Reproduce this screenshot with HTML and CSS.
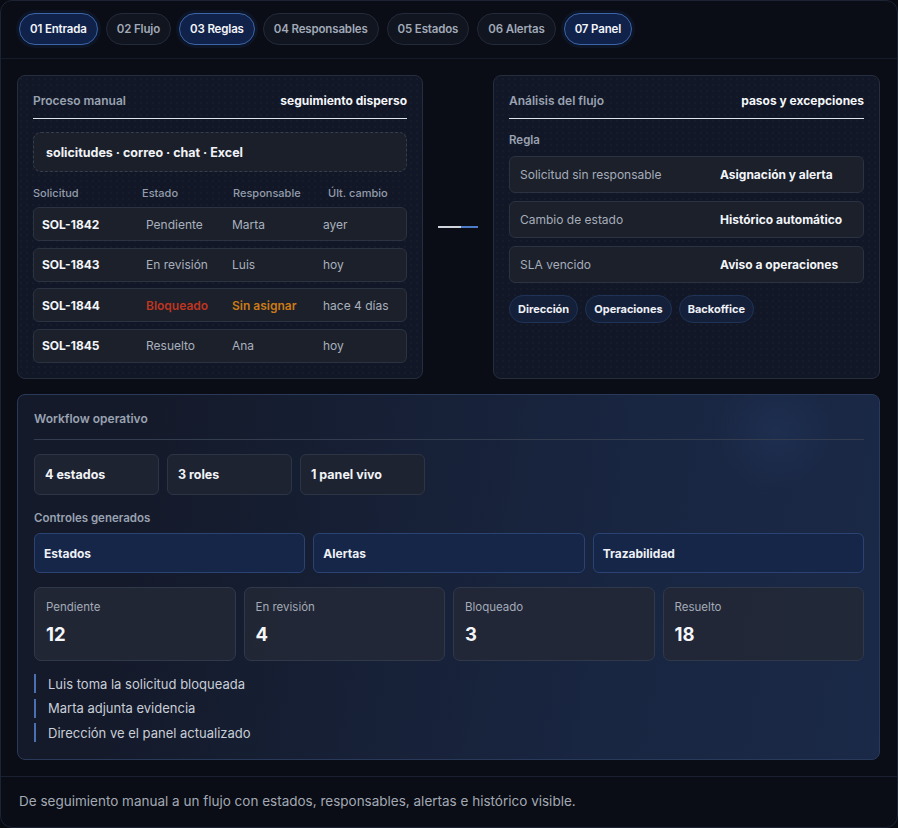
FILE: index.html
```html
<!DOCTYPE html>
<html lang="es">
<head>
<meta charset="utf-8">
<title>Workflow</title>
<link rel="stylesheet" href="styles.css">
</head>
<body>
<div class="frame">
  <nav class="tabs">
    <span class="tab active">01 Entrada</span>
    <span class="tab">02 Flujo</span>
    <span class="tab active">03 Reglas</span>
    <span class="tab">04 Responsables</span>
    <span class="tab">05 Estados</span>
    <span class="tab">06 Alertas</span>
    <span class="tab active">07 Panel</span>
  </nav>

  <main class="main">
    <div class="top">
      <section class="card">
        <div class="card-head">
          <span class="head-label">Proceso manual</span>
          <span class="head-value">seguimiento disperso</span>
        </div>
        <div class="sources">solicitudes · correo · chat · Excel</div>
        <div class="thead">
          <span>Solicitud</span><span>Estado</span><span>Responsable</span><span>Últ. cambio</span>
        </div>
        <div class="rows">
          <div class="row"><span class="id">SOL-1842</span><span>Pendiente</span><span>Marta</span><span>ayer</span></div>
          <div class="row"><span class="id">SOL-1843</span><span>En revisión</span><span>Luis</span><span>hoy</span></div>
          <div class="row"><span class="id">SOL-1844</span><span class="red">Bloqueado</span><span class="orange">Sin asignar</span><span>hace 4 días</span></div>
          <div class="row"><span class="id">SOL-1845</span><span>Resuelto</span><span>Ana</span><span>hoy</span></div>
        </div>
      </section>

      <div class="connector"><span class="c-left"></span><span class="c-right"></span></div>

      <section class="card">
        <div class="card-head">
          <span class="head-label">Análisis del flujo</span>
          <span class="head-value">pasos y excepciones</span>
        </div>
        <div class="sub-label rule-label">Regla</div>
        <div class="rules">
          <div class="rule"><span>Solicitud sin responsable</span><b>Asignación y alerta</b></div>
          <div class="rule"><span>Cambio de estado</span><b>Histórico automático</b></div>
          <div class="rule"><span>SLA vencido</span><b>Aviso a operaciones</b></div>
        </div>
        <div class="chips">
          <span class="chip">Dirección</span>
          <span class="chip">Operaciones</span>
          <span class="chip">Backoffice</span>
        </div>
      </section>
    </div>

    <section class="card workflow">
      <div class="wf-head">Workflow operativo</div>
      <div class="pills">
        <span class="pill">4 estados</span>
        <span class="pill">3 roles</span>
        <span class="pill">1 panel vivo</span>
      </div>
      <div class="sub-label ctrl-label">Controles generados</div>
      <div class="controls">
        <span class="control">Estados</span>
        <span class="control">Alertas</span>
        <span class="control">Trazabilidad</span>
      </div>
      <div class="stats">
        <div class="stat"><span class="stat-label">Pendiente</span><span class="stat-num">12</span></div>
        <div class="stat"><span class="stat-label">En revisión</span><span class="stat-num">4</span></div>
        <div class="stat"><span class="stat-label">Bloqueado</span><span class="stat-num">3</span></div>
        <div class="stat"><span class="stat-label">Resuelto</span><span class="stat-num">18</span></div>
      </div>
      <ul class="timeline">
        <li>Luis toma la solicitud bloqueada</li>
        <li>Marta adjunta evidencia</li>
        <li>Dirección ve el panel actualizado</li>
      </ul>
    </section>
  </main>

  <footer class="footer">De seguimiento manual a un flujo con estados, responsables, alertas e histórico visible.</footer>
</div>
</body>
</html>
```

FILE: styles.css
```css
* { box-sizing: border-box; }

html, body {
  margin: 0;
  padding: 0;
  background: #080b12;
}

body {
  font-family: Inter, "Noto Sans", "DejaVu Sans", sans-serif;
  color: #eef1f6;
  width: 898px;
  height: 828px;
}

.frame {
  width: 898px;
  height: 828px;
  border: 1px solid #1c2333;
  border-radius: 12px;
  background: #0a0d15;
  overflow: hidden;
  display: flex;
  flex-direction: column;
}

/* Tabs */
.tabs {
  display: flex;
  gap: 8px;
  padding: 12px 17px 0 18px;
  height: 58px;
  border-bottom: 1px solid #161c2a;
}

.tab {
  height: 32px;
  padding: 0 10px;
  border-radius: 16px;
  border: 1px solid #232a39;
  background: #10151f;
  color: #a1a9b7;
  font-size: 11.5px;
  font-weight: 600;
  display: flex;
  align-items: center;
  letter-spacing: -0.15px;
}

.tab.active {
  background: #11224a;
  border-color: #3a66a8;
  color: #f2f5fa;
  box-shadow: 0 0 0 3px rgba(30, 55, 110, 0.18);
}

/* Main */
.main {
  padding: 16px 17px 16px 16px;
  display: flex;
  flex-direction: column;
  gap: 15px;
  border-bottom: 1px solid #1a2030;
}

.top {
  display: grid;
  grid-template-columns: 406px 70px 1fr;
  height: 304px;
}

.card {
  border: 1px solid #262e3e;
  border-radius: 8px;
  background-color: #111726;
  background-image: radial-gradient(rgba(255,255,255,0.025) 1px, transparent 1px);
  background-size: 6px 6px;
  padding: 15px 15px 15px 15px;
}

.card-head {
  display: flex;
  justify-content: space-between;
  align-items: center;
  height: 27px;
  padding-bottom: 10px;
  border-bottom: 1px solid #dfe3ea;
  margin-top: 1px;
}

.head-label {
  font-size: 12px;
  font-weight: 600;
  color: #9aa2b1;
}

.head-value {
  font-size: 12px;
  font-weight: 700;
  color: #f4f6fa;
}

.sources {
  margin-top: 13px;
  height: 40px;
  border: 1px dashed #363e4d;
  border-radius: 8px;
  background: #1a1f2a;
  display: flex;
  align-items: center;
  padding-left: 12px;
  font-size: 12.5px;
  font-weight: 700;
  color: #f1f3f7;
}

.thead {
  display: grid;
  grid-template-columns: 109px 91px 95px 1fr;
  margin-top: 14px;
  height: 14px;
  font-size: 11px;
  font-weight: 500;
  color: #949cab;
  align-items: center;
}

.rows {
  margin-top: 7px;
  display: flex;
  flex-direction: column;
  gap: 6.5px;
}

.row {
  height: 34px;
  display: grid;
  grid-template-columns: 104px 86px 91px 1fr;
  align-items: center;
  padding-left: 8px;
  border: 1px solid #2b3342;
  border-radius: 6px;
  background: #1b202b;
  font-size: 12px;
  color: #a9b0bc;
}

.row .id {
  color: #f3f5f9;
  font-weight: 700;
}

.row .red { color: #bf3520; font-weight: 600; }
.row .orange { color: #cc7a16; font-weight: 600; }

/* Connector */
.connector {
  display: flex;
  align-items: center;
  justify-content: center;
}

.c-left, .c-right {
  height: 2px;
  display: block;
}
.c-left { width: 23px; background: #cfd3da; }
.c-right { width: 17px; background: #4b7bc9; }

/* Right card */
.sub-label {
  font-size: 11.5px;
  font-weight: 600;
  color: #9aa2b1;
}

.rule-label {
  margin-top: 14px;
  height: 14px;
  display: flex;
  align-items: center;
}

.rules {
  margin-top: 9px;
  display: flex;
  flex-direction: column;
  gap: 8px;
}

.rule {
  height: 37px;
  border: 1px solid #2b3342;
  border-radius: 6px;
  background: #1b202b;
  display: grid;
  grid-template-columns: 200px 1fr;
  align-items: center;
  padding-left: 10px;
  font-size: 12px;
  color: #a6adb9;
}

.rule b {
  color: #f3f5f9;
  font-weight: 700;
}

.chips {
  display: flex;
  gap: 7px;
  margin-top: 12px;
}

.chip {
  height: 28px;
  padding: 0 8px;
  border-radius: 14px;
  border: 1px solid #1f3356;
  background: #14203a;
  display: flex;
  align-items: center;
  font-size: 11px;
  font-weight: 700;
  color: #eef1f6;
}

/* Workflow card */
.workflow {
  height: 366px;
  border-color: #28395a;
  background-color: #141a2a;
  background-image:
    radial-gradient(circle at 88% 10%, rgba(60, 95, 160, 0.12) 0, rgba(60, 95, 160, 0) 60px),
    linear-gradient(100deg, #141a2a 15%, #192642 70%, #1a2947 100%);
  background-size: auto;
  padding: 16px 15px 15px 16px;
}

.wf-head {
  font-size: 12px;
  font-weight: 600;
  color: #9aa2b1;
  height: 29px;
  border-bottom: 1px solid #343d4f;
  display: flex;
  align-items: flex-start;
}

.pills {
  display: flex;
  gap: 8px;
  margin-top: 14px;
}

.pill {
  width: 125px;
  height: 41px;
  border: 1px solid #2d3545;
  border-radius: 6px;
  background: #1d2331;
  display: flex;
  align-items: center;
  padding-left: 10px;
  font-size: 12.5px;
  font-weight: 700;
  color: #f1f3f7;
}

.ctrl-label {
  margin-top: 15px;
  height: 15px;
  display: flex;
  align-items: center;
}

.controls {
  display: grid;
  grid-template-columns: repeat(3, 1fr);
  gap: 8px;
  margin-top: 8px;
}

.control {
  height: 40px;
  border: 1px solid #2a4372;
  border-radius: 6px;
  background: #152648;
  display: flex;
  align-items: center;
  padding-left: 9px;
  font-size: 12px;
  font-weight: 700;
  color: #eef1f6;
}

.stats {
  display: grid;
  grid-template-columns: repeat(4, 1fr);
  gap: 8px;
  margin-top: 14px;
}

.stat {
  height: 74px;
  border: 1px solid #30394a;
  border-radius: 7px;
  background: rgba(34, 40, 54, 0.9);
  padding: 12px 11px 0 11px;
  display: flex;
  flex-direction: column;
}

.stat-label {
  font-size: 11.5px;
  color: #a4abb7;
  height: 15px;
}

.stat-num {
  margin-top: 8px;
  font-size: 18.5px;
  font-weight: 700;
  color: #f4f6fa;
}

.timeline {
  list-style: none;
  margin: 13px 0 0 0;
  padding: 0;
  display: flex;
  flex-direction: column;
  gap: 5.5px;
}

.timeline li {
  height: 19px;
  border-left: 2px solid #4a6fb3;
  padding-left: 12px;
  font-size: 13px;
  color: #c9ced7;
  display: flex;
  align-items: center;
}

/* Footer */
.footer {
  flex: 1;
  display: flex;
  align-items: center;
  padding-left: 18px;
  padding-bottom: 2px;
  font-size: 13.5px;
  color: #a3a9b4;
}
```
